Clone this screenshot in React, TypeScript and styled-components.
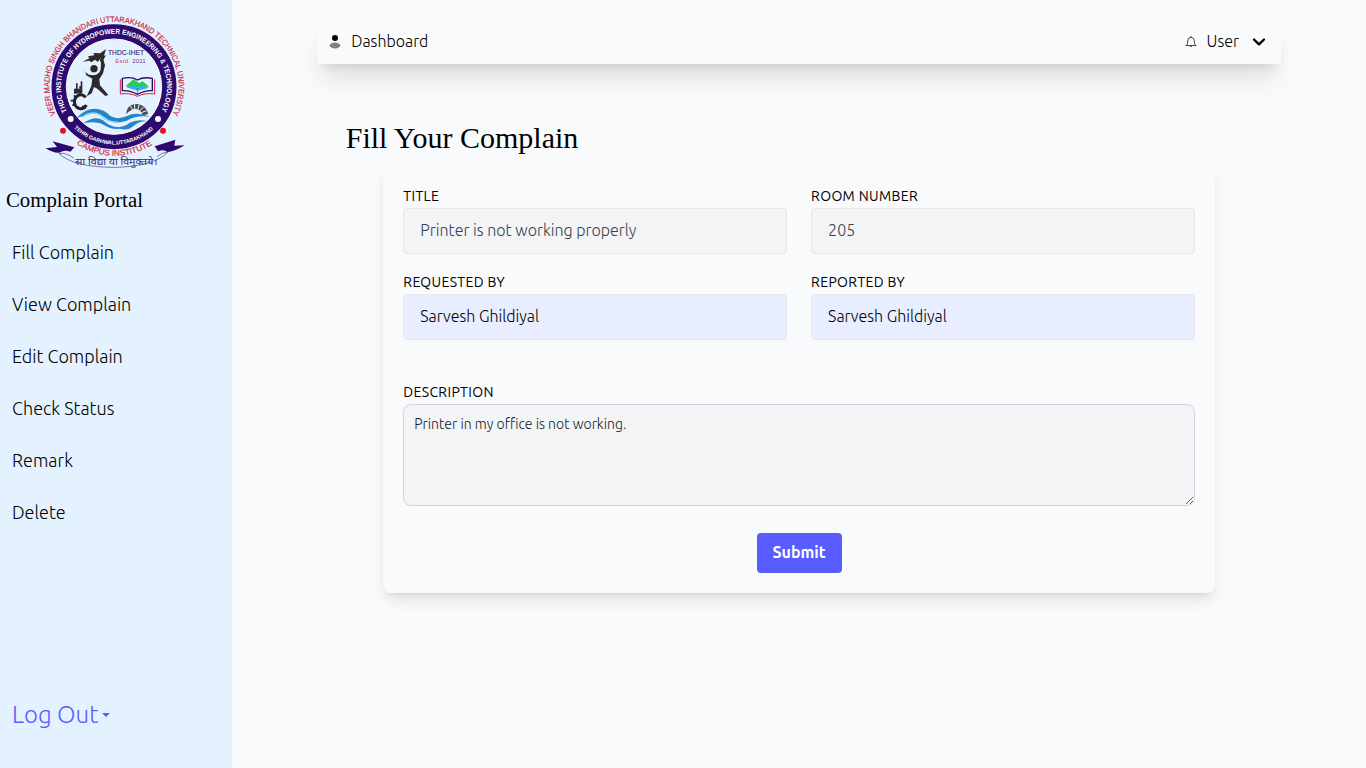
import React from "react";
import styled, { createGlobalStyle } from "styled-components";

const sans = `Ubuntu, "Noto Sans", "Open Sans", sans-serif`;
const serif = `"Liberation Serif", "Times New Roman", serif`;

const GlobalStyle = createGlobalStyle`
  *, *::before, *::after { box-sizing: border-box; }
  body {
    margin: 0;
    background: #f9fafc;
    color: #000;
    font-family: ${sans};
    font-weight: 300;
    font-size: 16px;
    line-height: 24px;
  }
  input, textarea, button { font-family: inherit; margin: 0; }
`;

const Page = styled.div`
  display: flex;
  height: 768px;
  overflow: hidden;
`;

const Sidebar = styled.aside`
  display: flex;
  flex-direction: column;
  flex: none;
  width: 17%;
  padding: 6px 0 35px;
  background: #e4f2ff;
`;

const Logo = styled.svg`
  width: 160px;
  height: 170px;
  margin-left: 34px;
  flex: none;
  overflow: visible;
`;

const PortalName = styled.h2`
  margin: 10px 0 0 6px;
  font-family: ${serif};
  font-weight: 400;
  font-size: 20.8px;
  line-height: 28px;
`;

const Menu = styled.nav`
  display: flex;
  flex-direction: column;
  gap: 24px;
  margin-top: 24px;
  padding-left: 12px;
`;

const MenuItem = styled.a`
  font-size: 18px;
  line-height: 28px;
`;

const LogOut = styled.a`
  display: flex;
  align-items: center;
  gap: 4px;
  margin-top: auto;
  padding-left: 12px;
  font-size: 24px;
  line-height: 36px;
  color: #595cff;
`;

const Main = styled.main`
  flex: 1;
  padding-top: 18px;
`;

const TopBar = styled.header`
  display: flex;
  align-items: center;
  justify-content: space-between;
  width: 85%;
  height: 46px;
  margin: 0 auto;
  padding: 0 12px;
  border-radius: 2px;
  background: #f9fafc;
  box-shadow: 0 20px 25px -5px rgba(0, 0, 0, 0.1), 0 8px 10px -6px rgba(0, 0, 0, 0.1);
`;

const BarGroup = styled.div<{ $gap: number }>`
  display: flex;
  align-items: center;
  gap: ${(p) => p.$gap}px;
`;

const Heading = styled.h1`
  margin: 56px 0 0 113.5px;
  font-family: ${serif};
  font-weight: 400;
  font-size: 30px;
  line-height: 36px;
`;

const Card = styled.form`
  width: 831.6px;
  margin: 6px auto 0;
  padding: 24px 20px 20px;
  border-radius: 8px;
  background: #f9fafc;
  box-shadow: 0 10px 15px -3px rgba(0, 0, 0, 0.1), 0 4px 6px -4px rgba(0, 0, 0, 0.1);
`;

const FieldGrid = styled.div`
  display: grid;
  grid-template-columns: 1fr 1fr;
  gap: 18px 24px;
`;

const Field = styled.label`
  display: flex;
  flex-direction: column;
  gap: 2px;
`;

const Caption = styled.span`
  font-size: 14px;
  line-height: 20px;
  font-weight: 400;
  letter-spacing: 0.35px;
  text-transform: uppercase;
`;

const TextInput = styled.input<{ $filled?: boolean }>`
  width: 100%;
  height: 46px;
  padding: 10px 16px 12px;
  border: 1px solid #e5e7eb;
  border-radius: 4px;
  outline: none;
  font-size: 16px;
  font-weight: 300;
  line-height: 20px;
  background: ${(p) => (p.$filled ? "#e8eeff" : "#f3f4f6")};
  color: ${(p) => (p.$filled ? "#000" : "#374151")};
`;

const Description = styled(Field)`
  margin-top: 42px;
`;

const TextArea = styled.textarea`
  display: block;
  width: 100%;
  height: 102px;
  padding: 9px 10px;
  border: 1px solid #d1d5db;
  border-radius: 8px;
  outline: none;
  resize: vertical;
  font-size: 14px;
  font-weight: 300;
  line-height: 20px;
  background: #f3f4f6;
  color: #111827;
`;

const Submit = styled.button`
  display: block;
  width: 85px;
  height: 40px;
  margin: 27px auto 0;
  padding: 0 0 2px;
  border: 0;
  border-radius: 4px;
  background: #595cff;
  color: #fff;
  font-size: 16px;
  font-weight: 700;
  line-height: 24px;
`;

const menu = ["Fill Complain", "View Complain", "Edit Complain", "Check Status", "Remark", "Delete"];

function CollegeLogo() {
  const purple = "#2d0a6e";
  const red = "#cf2442";
  return (
    <Logo viewBox="0 0 480 510" fontFamily="Liberation Sans, Arial, sans-serif" fontWeight="700">
      <defs>
        <path id="outerArc" d="M65 325A194 194 0 1 1 403 347" />
        <path id="ringArc" d="M100 318A159 159 0 1 1 374 328" />
        <path id="townArc" d="M119 365A173 173 0 0 0 363 365" />
        <path id="campusArc" d="M126 413A206 206 0 0 0 362 411" />
      </defs>
      <circle cx="240" cy="242" r="165" fill="none" stroke={purple} strokeWidth="45" />
      <circle cx="240" cy="242" r="143" fill="none" stroke="#fff" strokeWidth="3" />
      <g fill={red}>
        <text fontSize="23.5" fontWeight="400" stroke={red} strokeWidth=".5"><textPath href="#outerArc" textLength="782" lengthAdjust="spacingAndGlyphs">VEER MADHO SINGH BHANDARI UTTARAKHAND TECHNICAL UNIVERSITY</textPath></text>
        <text fontSize="24" fontWeight="400" stroke={red} strokeWidth=".5"><textPath href="#campusArc" startOffset="2" textLength="240" lengthAdjust="spacingAndGlyphs">CAMPUS INSTITUTE</textPath></text>
      </g>
      <g fill="#fff">
        <text fontSize="21.5"><textPath href="#ringArc" startOffset="2" textLength="650" lengthAdjust="spacingAndGlyphs">THDC INSTITUTE OF HYDROPOWER  ENGINEERING &amp; TECHNOLOGY</textPath></text>
        <text fontSize="16"><textPath href="#townArc" startOffset="2" textLength="262" lengthAdjust="spacingAndGlyphs">TEHRI GARHWAL,UTTARAKHAND</textPath></text>
        <circle cx="110" cy="339" r="9" />
        <circle cx="372" cy="339" r="9" />
      </g>
      <circle cx="87" cy="374" r="9" fill="#e5101f" />
      <circle cx="387" cy="374" r="9" fill="#e5101f" />

      <text x="222" y="148" fontSize="22" fontWeight="400" fill="#3c2a78" stroke="#3c2a78" strokeWidth=".4" textLength="108" lengthAdjust="spacingAndGlyphs">THDC-IHET</text>
      <text x="244" y="171" fontSize="18" fontWeight="400" fill="#c24a72" textLength="44">Estd.</text>
      <text x="295" y="171" fontSize="18" fontWeight="400" fill="#5a3b94" textLength="40">2011</text>

      <g fill="#2b2b2d">
        <path d="M146 167L166 157L162 151L181 148L178 141L199 142L216 129L210 149L216 148L206 164L199 157L192 168L183 161L172 169L166 164Z" />
        <circle cx="180" cy="188" r="11" />
        <path d="M147 180L153 198L165 206L178 208Q196 207 200 190L201 172L197 160L207 156L213 178L207 202L196 220L198 238L223 267L214 270L190 248L180 243L173 262L158 271L172 240L175 218L157 208Z" />
        <path d="M120 263V248H126V232H131V248H136V240H140V226H145V262Z" />
      </g>
      <path d="M155 274A19 21 0 1 0 157 297" fill="none" stroke="#202023" strokeWidth="9" />
      <path d="M137 262v8M120 268l6 7M110 284h9M115 299l7-5M130 309l2-8M149 306l-4-7" stroke="#202023" strokeWidth="5" />

      <path d="M265 217Q294 211 310 222Q329 212 355 217V254Q331 253 310 265Q290 253 265 254Z" fill="#e4f2ff" stroke={purple} strokeWidth="4" />
      <path d="M259 220V264Q290 260 310 271Q330 260 362 264V220" fill="none" stroke={red} strokeWidth="3" />
      <path d="M275 240L289 228L299 220L315 231L326 226L344 241L329 244H288Z" fill="#22cf52" />
      <path d="M276 244Q299 236 310 244Q324 236 345 245L311 254Z" fill="#41a9ed" />
      <path d="M310 246V264" stroke="#65539c" strokeWidth="2" />

      <path d="M276 325Q279 296 303 294Q333 291 343 324L326 328Q318 306 302 309Q288 311 276 325Z" fill="#50494c" />
      <path d="M289 300l8 12M302 292v18M316 295l-5 17M329 303l-13 12M338 314l-16 6" stroke="#e4f2ff" strokeWidth="3" />
      <g fill="#2585ca">
        <path d="M128 336Q157 305 190 309Q211 311 229 330Q250 343 279 330Q307 316 348 332Q306 327 278 344Q241 358 215 336Q190 315 158 326Z" />
        <path d="M148 351Q184 327 207 343Q239 374 278 358Q249 381 209 357Q190 344 148 351Z" />
        <path d="M240 361Q262 371 287 350Q308 338 340 345Q312 345 295 363Q272 379 240 361Z" />
      </g>
      <path d="M144 334Q172 313 198 326Q222 350 252 348" fill="none" stroke="#8fd0f3" strokeWidth="4" />

      <path d="M35 427L69 423L56 406L121 424L109 437Q92 430 76 440Q59 442 35 427Z" fill={purple} />
      <path d="M452 418L421 419L424 401L362 421L372 436Q389 429 400 438Q420 438 452 418Z" fill={purple} />
      <path d="M75 443Q120 484 240 484Q358 482 401 439" fill="none" stroke="#46337a" strokeWidth="2" />
      <path d="M75 443Q93 438 119 456M401 439Q386 437 369 452" fill="none" stroke="#46337a" strokeWidth="2" />
      <text x="124" y="477" fontSize="27" fontWeight="400" fill="#34265f" fontFamily="Noto Sans, sans-serif" textLength="246" lengthAdjust="spacingAndGlyphs">सा विद्या या विमुक्तये।</text>
    </Logo>
  );
}

export default function App() {
  return (
    <>
      <GlobalStyle />
      <Page>
        <Sidebar>
          <CollegeLogo />
          <PortalName>Complain Portal</PortalName>
          <Menu>
            {menu.map((item) => (
              <MenuItem key={item}>{item}</MenuItem>
            ))}
          </Menu>
          <LogOut>
            Log Out
            <svg width="8" height="4" viewBox="0 0 8 4"><path d="M0 0H8L4 4Z" fill="currentColor" /></svg>
          </LogOut>
        </Sidebar>
        <Main>
          <TopBar>
            <BarGroup $gap={10}>
              <svg width="12" height="16" viewBox="0 0 12 16">
                <circle cx="6" cy="5" r="3" />
                <ellipse cx="6" cy="12.5" rx="5.3" ry="3" fill="#808183" />
              </svg>
              <span>Dashboard</span>
            </BarGroup>
            <BarGroup $gap={10}>
              <svg width="12" height="12" viewBox="0 0 12 12" fill="none" stroke="#333" strokeWidth=".9">
                <path d="M.5 10.5H11.5M1.7 10.4Q2.7 9.3 2.7 6Q2.7 2.4 6 2.4Q9.3 2.4 9.3 6Q9.3 9.3 10.3 10.4M6 1.1V2.4M4.8 11Q6 12 7.2 11" />
              </svg>
              <span>User</span>
              <svg width="20" height="20" viewBox="0 0 20 20" fill="none" stroke="#000" strokeWidth="2.3" strokeLinecap="round" strokeLinejoin="round">
                <path d="M5 8.5L10 13.3L15 8.5" />
              </svg>
            </BarGroup>
          </TopBar>
          <Heading>Fill Your Complain</Heading>
          <Card>
            <FieldGrid>
              <Field><Caption>Title</Caption><TextInput defaultValue="Printer is not working properly" /></Field>
              <Field><Caption>Room Number</Caption><TextInput defaultValue="205" /></Field>
              <Field><Caption>Requested By</Caption><TextInput $filled defaultValue="Sarvesh Ghildiyal" /></Field>
              <Field><Caption>Reported By</Caption><TextInput $filled defaultValue="Sarvesh Ghildiyal" /></Field>
            </FieldGrid>
            <Description>
              <Caption>Description</Caption>
              <TextArea defaultValue="Printer in my office is not working." />
            </Description>
            <Submit type="button">Submit</Submit>
          </Card>
        </Main>
      </Page>
    </>
  );
}
